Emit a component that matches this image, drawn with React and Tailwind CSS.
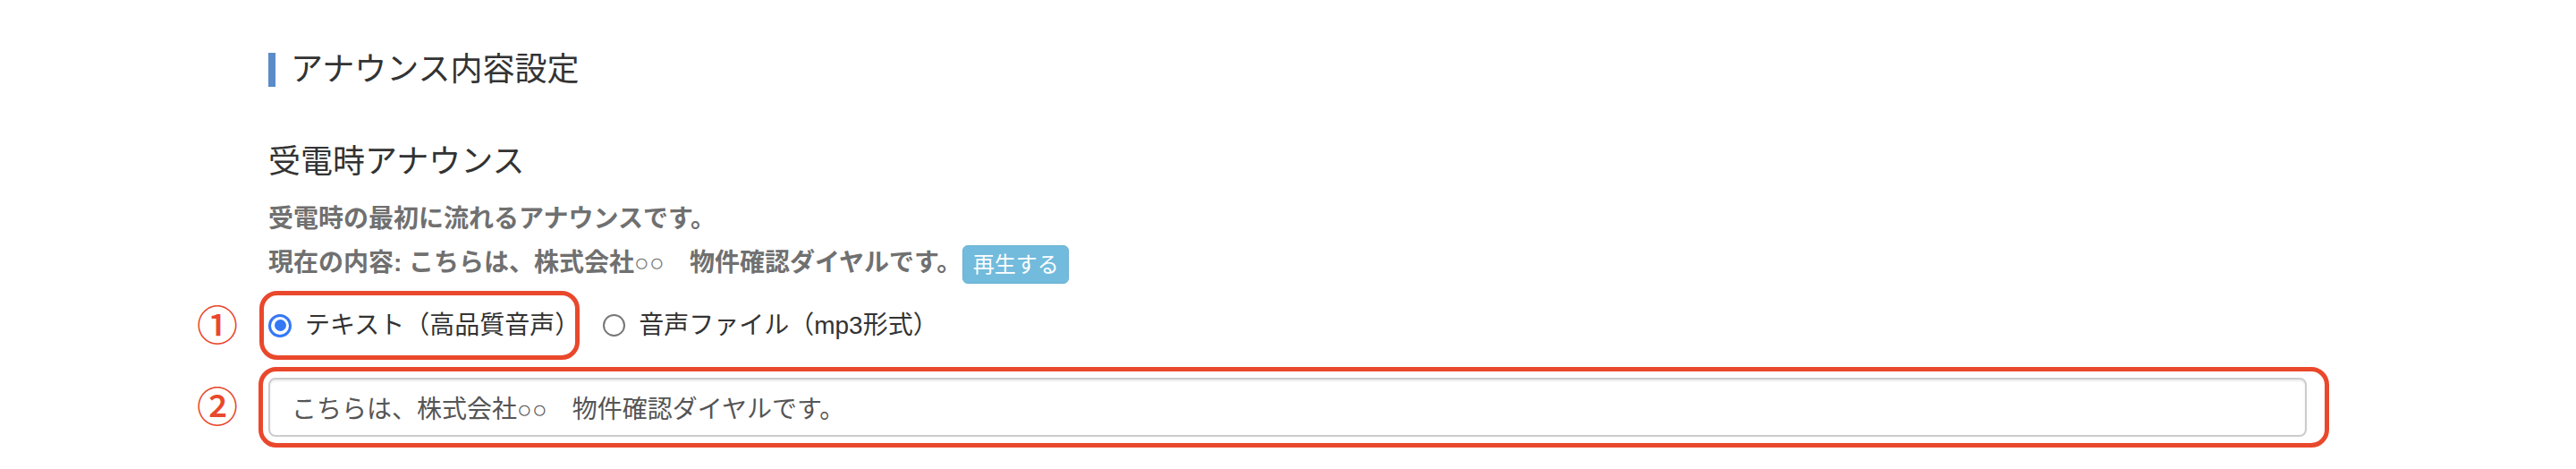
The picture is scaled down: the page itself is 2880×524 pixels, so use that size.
export default function App() {
  return (
    <div className="min-h-[524px] w-full bg-white font-['Liberation_Sans','Noto_Sans_CJK_JP',sans-serif] text-[#333]">
      <div className="ml-[300px] w-[2279px] pt-[59px]">
        {/* section title with accent bar */}
        <h2 className="border-l-[8px] border-[#5b8cc9] pl-[17px] text-[36px] leading-[38px]">
          アナウンス内容設定
        </h2>

        <h3 className="mt-[66px] text-[36px] leading-[36px]">受電時アナウンス</h3>

        <p className="mt-[32px] text-[28px] font-bold leading-[28px] text-[#707070]">
          受電時の最初に流れるアナウンスです。
        </p>

        <div className="mt-[15px] flex items-start">
          <span className="mt-[6px] text-[28px] font-bold leading-[28px] text-[#707070]">
            現在の内容: こちらは、株式会社○○　物件確認ダイヤルです。
          </span>
          <button
            type="button"
            className="ml-[1px] flex h-[43px] w-[119px] items-center justify-center rounded-[6px] border border-[#68b1d3] bg-[#72bbdc] text-[24px] leading-none text-white"
          >
            再生する
          </button>
        </div>

        {/* announcement type */}
        <div className="relative mt-[8px] flex h-[77px] items-center">
          <span className="absolute -left-[80px] top-1/2 -translate-y-1/2 text-[46px] font-medium leading-none text-[#e9482c]">
            ①
          </span>
          <span className="pointer-events-none absolute -left-[10px] top-0 h-full w-[358px] rounded-[20px] border-[5px] border-[#e9482c]" />
          <label className="flex items-center">
            <span className="flex h-[26px] w-[26px] items-center justify-center rounded-full border-[3px] border-[#3478f6]">
              <span className="h-[13px] w-[13px] rounded-full bg-[#3478f6]" />
            </span>
            <span className="ml-[15px] text-[28px] leading-[28px] text-[#333]">テキスト（高品質音声）</span>
          </label>
          <label className="ml-[26px] flex items-center">
            <span className="h-[25px] w-[25px] rounded-full border-2 border-[#767676]" />
            <span className="ml-[15px] text-[28px] leading-[28px] text-[#333]">音声ファイル（mp3形式）</span>
          </label>
        </div>

        {/* announcement text */}
        <div className="relative mt-[8px] py-[12px]">
          <span className="absolute -left-[80px] top-1/2 -translate-y-1/2 text-[46px] font-medium leading-none text-[#e9482c]">
            ②
          </span>
          <span className="pointer-events-none absolute -left-[11px] -right-[25px] inset-y-0 rounded-[20px] border-[5px] border-[#e9482c]" />
          <input
            readOnly
            value="こちらは、株式会社○○　物件確認ダイヤルです。"
            className="block h-[66px] w-full rounded-[8px] border-2 border-[#cccccc] bg-white px-[24px] text-[28px] text-[#555] shadow-[inset_0_2px_2px_rgba(0,0,0,0.075)] outline-none"
          />
        </div>
      </div>
    </div>
  );
}
